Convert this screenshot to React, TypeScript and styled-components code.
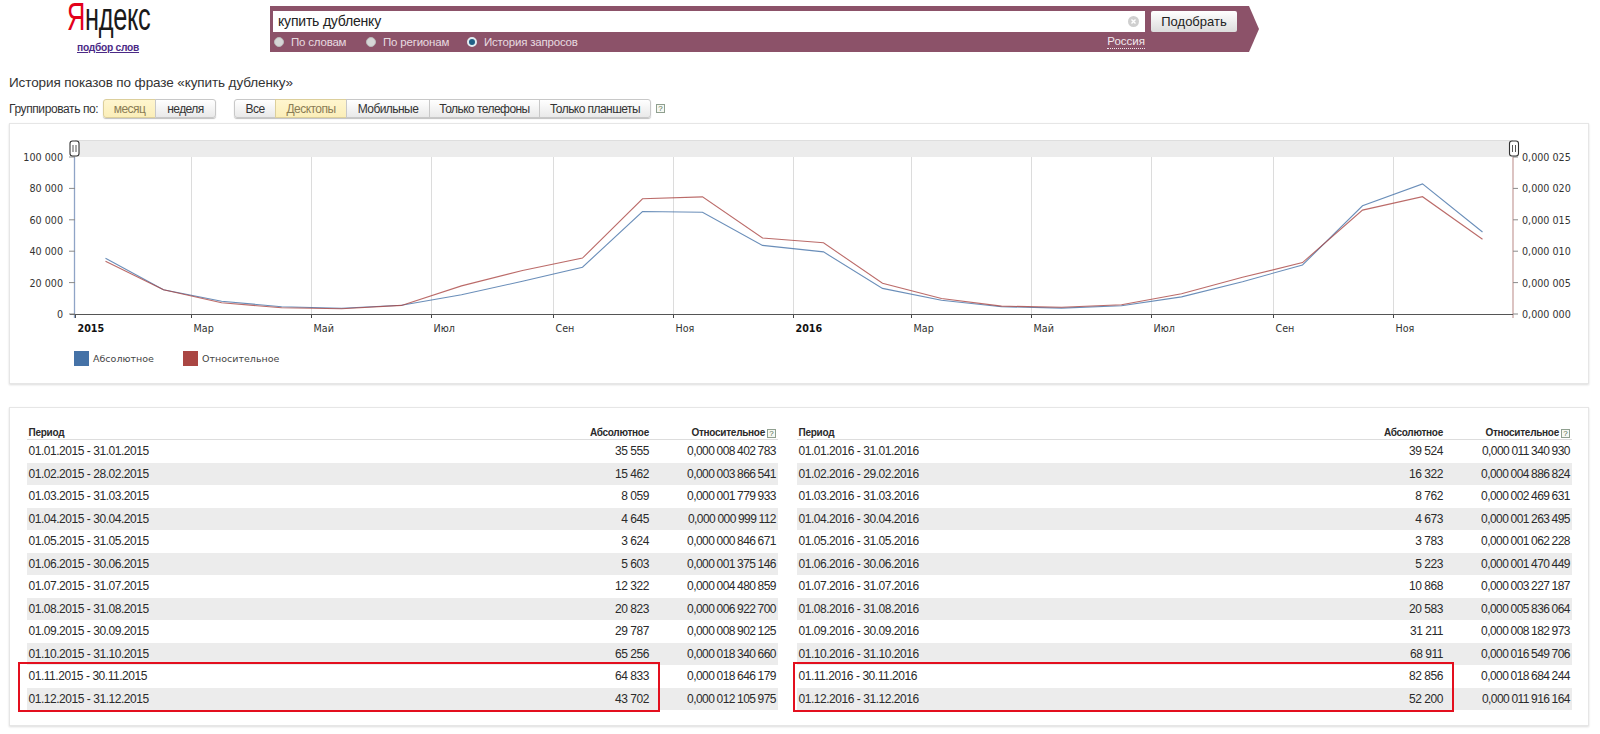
import React from 'react'
import styled, { createGlobalStyle } from 'styled-components'

const GlobalStyle = createGlobalStyle`
  html, body {
    margin: 0;
    padding: 0;
    background: #fff;
    font-family: "Liberation Sans", Arial, sans-serif;
    color: #222;
    overflow: hidden;
  }
`

const Page = styled.div`
  width: 1600px;
  height: 734px;
  overflow: hidden;
`

const Header = styled.header`
  display: flex;
  height: 58px;
`

const LogoCol = styled.div`
  width: 270px;
  flex: none;
  padding-left: 67px;
  box-sizing: border-box;
`

const Logo = styled.div`
  height: 33px;
  font-size: 39px;
  line-height: 33px;
  white-space: nowrap;
  color: #1a1a1a;
  transform: scaleX(0.65);
  transform-origin: left center;
  letter-spacing: -0.5px;

  span {
    color: #e3001b;
  }
`

const WordsLink = styled.a`
  display: block;
  margin: 9px 0 0 10px;
  font-size: 10.2px;
  font-weight: bold;
  letter-spacing: -0.25px;
  line-height: 12px;
  color: #4b2a86;
  text-decoration: underline;
`

const SearchBar = styled.form`
  width: 989px;
  height: 46px;
  margin: 6px 0 0;
  padding: 5px 0 0 3px;
  box-sizing: border-box;
  background: #8c5269;
  clip-path: polygon(0 0, 979px 0, 100% 50%, 979px 100%, 0 100%);
`

const SearchTop = styled.div`
  display: flex;
  gap: 6px;
`

const InputBox = styled.div`
  width: 872px;
  height: 21px;
  box-sizing: border-box;
  padding: 0 5px 2px;
  background: #fff;
  display: flex;
  align-items: center;
  justify-content: space-between;
  font-size: 14px;
  letter-spacing: -0.2px;
  color: #222;
`

const ClearIcon = styled.svg`
  width: 11px;
  height: 11px;
  margin: 2px 1px 0 0;
`

const SubmitButton = styled.button`
  width: 86px;
  height: 21px;
  padding: 0;
  border: 0;
  border-radius: 2px;
  background: linear-gradient(#ffffff, #dcdcdc);
  font-family: inherit;
  font-size: 13px;
  color: #222;
`

const SearchBottom = styled.div`
  display: flex;
  align-items: center;
  height: 20px;
  margin: 0 114px 0 0;
  padding-left: 1px;
  font-size: 11.5px;
  letter-spacing: -0.2px;
  color: #e8dbe0;
`

const RadioLabel = styled.label<{ $width: number }>`
  display: flex;
  align-items: center;
  gap: 7px;
  width: ${(p) => p.$width}px;
`

const RadioDot = styled.span<{ $on?: boolean }>`
  width: 10px;
  height: 10px;
  box-sizing: border-box;
  border-radius: 50%;
  background: ${(p) => (p.$on ? '#1f5f86' : '#d6d6d6')};
  border: ${(p) => (p.$on ? '2px solid #e2edf2' : '1px solid #bbb')};
`

const Region = styled.span`
  margin-left: auto;
  color: #f1e8ec;
  font-size: 11.5px;
  letter-spacing: 0;
  padding-bottom: 1px;
  border-bottom: 1px dotted #f1e8ec;
`

const Title = styled.h1`
  margin: 16px 0 0 9px;
  font-size: 13.5px;
  line-height: 18px;
  font-weight: normal;
  letter-spacing: -0.1px;
  color: #333;
`

const Controls = styled.div`
  display: flex;
  align-items: center;
  height: 19px;
  margin: 7px 0 0 9px;
  font-size: 12px;
  letter-spacing: -0.4px;
  color: #333;
`

const ControlLabel = styled.span`
  width: 94px;
`

const ButtonGroup = styled.div<{ $gap?: number }>`
  display: flex;
  margin-right: ${(p) => p.$gap ?? 0}px;
  box-shadow: 0 1px 1px rgba(0, 0, 0, 0.25);
  border-radius: 3px;
`

const ToggleButton = styled.div<{ $width: number; $active?: boolean }>`
  width: ${(p) => p.$width}px;
  height: 19px;
  box-sizing: border-box;
  display: flex;
  align-items: center;
  justify-content: center;
  border: 1px solid ${(p) => (p.$active ? '#dccf9c' : '#c8c8c8')};
  margin-left: -1px;
  background: ${(p) =>
    p.$active
      ? 'linear-gradient(#fff6cf, #fbeeb9)'
      : 'linear-gradient(#ffffff, #e9e9e9)'};
  color: ${(p) => (p.$active ? '#8a7c55' : '#333')};
  letter-spacing: -0.55px;

  &:first-child {
    border-radius: 3px 0 0 3px;
    margin-left: 0;
  }
  &:last-child {
    border-radius: 0 3px 3px 0;
  }
`

const HelpMark = styled.span`
  display: inline-block;
  width: 7px;
  height: 7px;
  box-sizing: content-box;
  border: 1px solid #8f9f8f;
  font-size: 8px;
  line-height: 7px;
  letter-spacing: 0;
  text-align: center;
  color: #4f6f4f;
  background: #f6f8f2;
`

const Card = styled.section`
  width: 1580px;
  box-sizing: border-box;
  margin-left: 9px;
  background: #fff;
  border: 1px solid #e6e6e6;
  box-shadow: 0 1px 2px rgba(0, 0, 0, 0.14);
`

const ChartCard = styled(Card)`
  margin-top: 5px;
  height: 261px;
  padding-top: 10px;
`

const ChartSvg = styled.svg`
  display: block;
  font-family: "DejaVu Sans", Verdana, sans-serif;
  font-size: 9.6px;
`

const Legend = styled.div`
  display: flex;
  margin: 11px 0 0 64px;
  font-family: "DejaVu Sans", Verdana, sans-serif;
  font-size: 9.5px;
  color: #444;
`

const LegendItem = styled.div`
  display: flex;
  align-items: center;
  gap: 4px;
  width: 109px;
`

const Swatch = styled.span<{ $color: string }>`
  width: 15px;
  height: 15px;
  background: ${(p) => p.$color};
`

const TableCard = styled(Card)`
  margin-top: 23px;
  height: 319px;
  padding: 15px 16px 0 17px;
  display: flex;
  align-items: flex-start;
  justify-content: space-between;
`

const TableBlock = styled.div<{ $width: number }>`
  position: relative;
  width: ${(p) => p.$width}px;
`

const Row = styled.div<{ $striped?: boolean }>`
  display: grid;
  grid-template-columns: 1fr 100px 127px;
  height: 22.5px;
  align-items: center;
  font-size: 12px;
  letter-spacing: -0.46px;
  color: #2a2a2a;
  background: ${(p) => (p.$striped ? '#ececec' : 'transparent')};

  > span {
    padding: 0 2px 0 1.5px;
  }
  > span:nth-child(n + 2) {
    text-align: right;
  }
  > span:nth-child(3) {
    letter-spacing: -0.55px;
    word-spacing: -0.6px;
  }
`

const HeadRow = styled(Row)`
  height: 17px;
  box-sizing: border-box;
  border-bottom: 1px solid #ddd;
  font-size: 10px;
  font-weight: bold;
  letter-spacing: -0.27px;
  align-items: end;
  padding-bottom: 1px;

  > span:nth-child(3) {
    letter-spacing: -0.27px;
    word-spacing: 0;
  }

  ${HelpMark} {
    margin-left: 2px;
    font-weight: normal;
  }
`

const Highlight = styled.div<{ $left: number; $width: number }>`
  position: absolute;
  left: ${(p) => p.$left}px;
  width: ${(p) => p.$width}px;
  bottom: -2px;
  height: 50px;
  box-sizing: border-box;
  border: 2px solid #e30f1e;
  pointer-events: none;
`

type Entry = [string, string, string, string]

const y2015: Entry[] = [
  ['01.01.2015', '31.01.2015', '35 555', '0,000 008 402 783'],
  ['01.02.2015', '28.02.2015', '15 462', '0,000 003 866 541'],
  ['01.03.2015', '31.03.2015', '8 059', '0,000 001 779 933'],
  ['01.04.2015', '30.04.2015', '4 645', '0,000 000 999 112'],
  ['01.05.2015', '31.05.2015', '3 624', '0,000 000 846 671'],
  ['01.06.2015', '30.06.2015', '5 603', '0,000 001 375 146'],
  ['01.07.2015', '31.07.2015', '12 322', '0,000 004 480 859'],
  ['01.08.2015', '31.08.2015', '20 823', '0,000 006 922 700'],
  ['01.09.2015', '30.09.2015', '29 787', '0,000 008 902 125'],
  ['01.10.2015', '31.10.2015', '65 256', '0,000 018 340 660'],
  ['01.11.2015', '30.11.2015', '64 833', '0,000 018 646 179'],
  ['01.12.2015', '31.12.2015', '43 702', '0,000 012 105 975'],
]

const y2016: Entry[] = [
  ['01.01.2016', '31.01.2016', '39 524', '0,000 011 340 930'],
  ['01.02.2016', '29.02.2016', '16 322', '0,000 004 886 824'],
  ['01.03.2016', '31.03.2016', '8 762', '0,000 002 469 631'],
  ['01.04.2016', '30.04.2016', '4 673', '0,000 001 263 495'],
  ['01.05.2016', '31.05.2016', '3 783', '0,000 001 062 228'],
  ['01.06.2016', '30.06.2016', '5 223', '0,000 001 470 449'],
  ['01.07.2016', '31.07.2016', '10 868', '0,000 003 227 187'],
  ['01.08.2016', '31.08.2016', '20 583', '0,000 005 836 064'],
  ['01.09.2016', '30.09.2016', '31 211', '0,000 008 182 973'],
  ['01.10.2016', '31.10.2016', '68 911', '0,000 016 549 706'],
  ['01.11.2016', '30.11.2016', '82 856', '0,000 018 684 244'],
  ['01.12.2016', '31.12.2016', '52 200', '0,000 011 916 164'],
]

// chart geometry, in page pixels
const LEFT = 75
const RIGHT = 1513
const TOP = 157
const BOTTOM = 314
const DAY = (RIGHT - LEFT) / 731

const monthDays = [31, 28, 31, 30, 31, 30, 31, 31, 30, 31, 30, 31, 31, 29, 31, 30, 31, 30, 31, 31, 30, 31, 30, 31]
const monthStart = monthDays.map((_, i) => monthDays.slice(0, i).reduce((a, b) => a + b, 0))
const names = ['2015', 'Мар', 'Май', 'Июл', 'Сен', 'Ноя', '2016', 'Мар', 'Май', 'Июл', 'Сен', 'Ноя']

const all = [...y2015, ...y2016]
const num = (s: string) => Number(s.replace(/\s/g, '').replace(',', '.'))
const pointX = (i: number) => LEFT + (monthStart[i] + monthDays[i] / 2) * DAY
const absLine = all.map((e, i) => `${pointX(i).toFixed(1)},${(BOTTOM - (num(e[2]) / 100000) * 157).toFixed(1)}`).join(' ')
const relLine = all.map((e, i) => `${pointX(i).toFixed(1)},${(BOTTOM - (num(e[3]) / 0.000025) * 157).toFixed(1)}`).join(' ')

const leftTicks = ['100 000', '80 000', '60 000', '40 000', '20 000', '0']
const rightTicks = ['0,000 025', '0,000 020', '0,000 015', '0,000 010', '0,000 005', '0,000 000']

const Handle = ({ x }: { x: number }) => (
  <g>
    <rect x={x - 4.5} y={141} width={9} height={15} rx={2.5} fill="#fff" stroke="#333" strokeWidth={1.1} />
    <path d={`M${x - 1.5} 145V152M${x + 1.5} 145V152`} stroke="#555" fill="none" />
  </g>
)

const Chart = () => (
  <ChartSvg width={1578} height={206} viewBox="10 134 1578 206">
    <rect x={LEFT} y={140} width={RIGHT - LEFT} height={17} fill="#ececec" />
    <line x1={LEFT} x2={RIGHT} y1={140.5} y2={140.5} stroke="#dedede" />
    {names.map((name, n) => {
      const x = Math.round(LEFT + monthStart[n * 2] * DAY) + 0.5
      const bold = name.length === 4
      return (
        <g key={n}>
          {n > 0 && <line x1={x} x2={x} y1={TOP} y2={BOTTOM} stroke="#dcdcdc" />}
          <line x1={x} x2={x} y1={BOTTOM} y2={318} stroke="#444" />
          <text x={x + 2} y={332} fill={bold ? '#111' : '#333'} fontWeight={bold ? 'bold' : 'normal'}>{name}</text>
        </g>
      )
    })}
    <line x1={LEFT - 0.5} x2={LEFT - 0.5} y1={TOP} y2={318} stroke="#8fa4c6" strokeWidth={1.3} />
    <line x1={RIGHT} x2={RIGHT} y1={TOP} y2={318} stroke="#c9a4a1" strokeWidth={1.3} />
    <line x1={LEFT - 5} x2={RIGHT} y1={BOTTOM + 0.5} y2={BOTTOM + 0.5} stroke="#555" />
    {leftTicks.map((t, i) => {
      const y = TOP + i * 31.4
      return (
        <g key={t}>
          <line x1={LEFT - 6} x2={LEFT} y1={y} y2={y} stroke="#8a8a8a" />
          <text x={63} y={y + 4} textAnchor="end" fill="#333">{t}</text>
        </g>
      )
    })}
    {rightTicks.map((t, i) => {
      const y = TOP + i * 31.4
      return (
        <g key={t}>
          <line x1={RIGHT} x2={RIGHT + 5} y1={y} y2={y} stroke="#8a8a8a" />
          <text x={1522} y={y + 4} fill="#333">{t}</text>
        </g>
      )
    })}
    <polyline points={absLine} fill="none" stroke="#4572a7" strokeOpacity={0.8} strokeWidth={1.1} />
    <polyline points={relLine} fill="none" stroke="#aa4643" strokeOpacity={0.8} strokeWidth={1.1} />
    <Handle x={74.5} />
    <Handle x={1514} />
  </ChartSvg>
)

const DataTable = ({ rows, width, boxLeft, boxWidth }: {
  rows: Entry[]
  width: number
  boxLeft: number
  boxWidth: number
}) => (
  <TableBlock $width={width}>
    <HeadRow>
      <span>Период</span>
      <span>Абсолютное</span>
      <span>Относительное<HelpMark>?</HelpMark></span>
    </HeadRow>
    {rows.map((r, i) => (
      <Row key={r[0]} $striped={i % 2 === 1}>
        <span>{r[0]} - {r[1]}</span>
        <span>{r[2]}</span>
        <span>{r[3]}</span>
      </Row>
    ))}
    <Highlight $left={boxLeft} $width={boxWidth} />
  </TableBlock>
)

const App = () => (
  <Page>
    <GlobalStyle />
    <Header>
      <LogoCol>
        <Logo><span>Я</span>ндекс</Logo>
        <WordsLink>подбор слов</WordsLink>
      </LogoCol>
      <SearchBar>
        <SearchTop>
          <InputBox>
            купить дубленку
            <ClearIcon viewBox="0 0 11 11">
              <circle cx="5.5" cy="5.5" r="5.5" fill="#cfcfcf" />
              <path d="M3.5 3.5l4 4M7.5 3.5l-4 4" stroke="#fff" strokeWidth="1.4" />
            </ClearIcon>
          </InputBox>
          <SubmitButton type="button">Подобрать</SubmitButton>
        </SearchTop>
        <SearchBottom>
          <RadioLabel $width={92}><RadioDot />По словам</RadioLabel>
          <RadioLabel $width={101}><RadioDot />По регионам</RadioLabel>
          <RadioLabel $width={120}><RadioDot $on />История запросов</RadioLabel>
          <Region>Россия</Region>
        </SearchBottom>
      </SearchBar>
    </Header>

    <Title>История показов по фразе «купить дубленку»</Title>

    <Controls>
      <ControlLabel>Группировать по:</ControlLabel>
      <ButtonGroup $gap={18}>
        <ToggleButton $width={53} $active>месяц</ToggleButton>
        <ToggleButton $width={61}>неделя</ToggleButton>
      </ButtonGroup>
      <ButtonGroup $gap={5}>
        <ToggleButton $width={42}>Все</ToggleButton>
        <ToggleButton $width={72} $active>Десктопы</ToggleButton>
        <ToggleButton $width={84}>Мобильные</ToggleButton>
        <ToggleButton $width={111}>Только телефоны</ToggleButton>
        <ToggleButton $width={112}>Только планшеты</ToggleButton>
      </ButtonGroup>
      <HelpMark>?</HelpMark>
    </Controls>

    <ChartCard>
      <Chart />
      <Legend>
        <LegendItem><Swatch $color="#4572a7" />Абсолютное</LegendItem>
        <LegendItem><Swatch $color="#aa4643" />Относительное</LegendItem>
      </Legend>
    </ChartCard>

    <TableCard>
      <DataTable rows={y2015} width={751} boxLeft={-9} boxWidth={642} />
      <DataTable rows={y2016} width={775} boxLeft={-4} boxWidth={661} />
    </TableCard>
  </Page>
)

export default App
